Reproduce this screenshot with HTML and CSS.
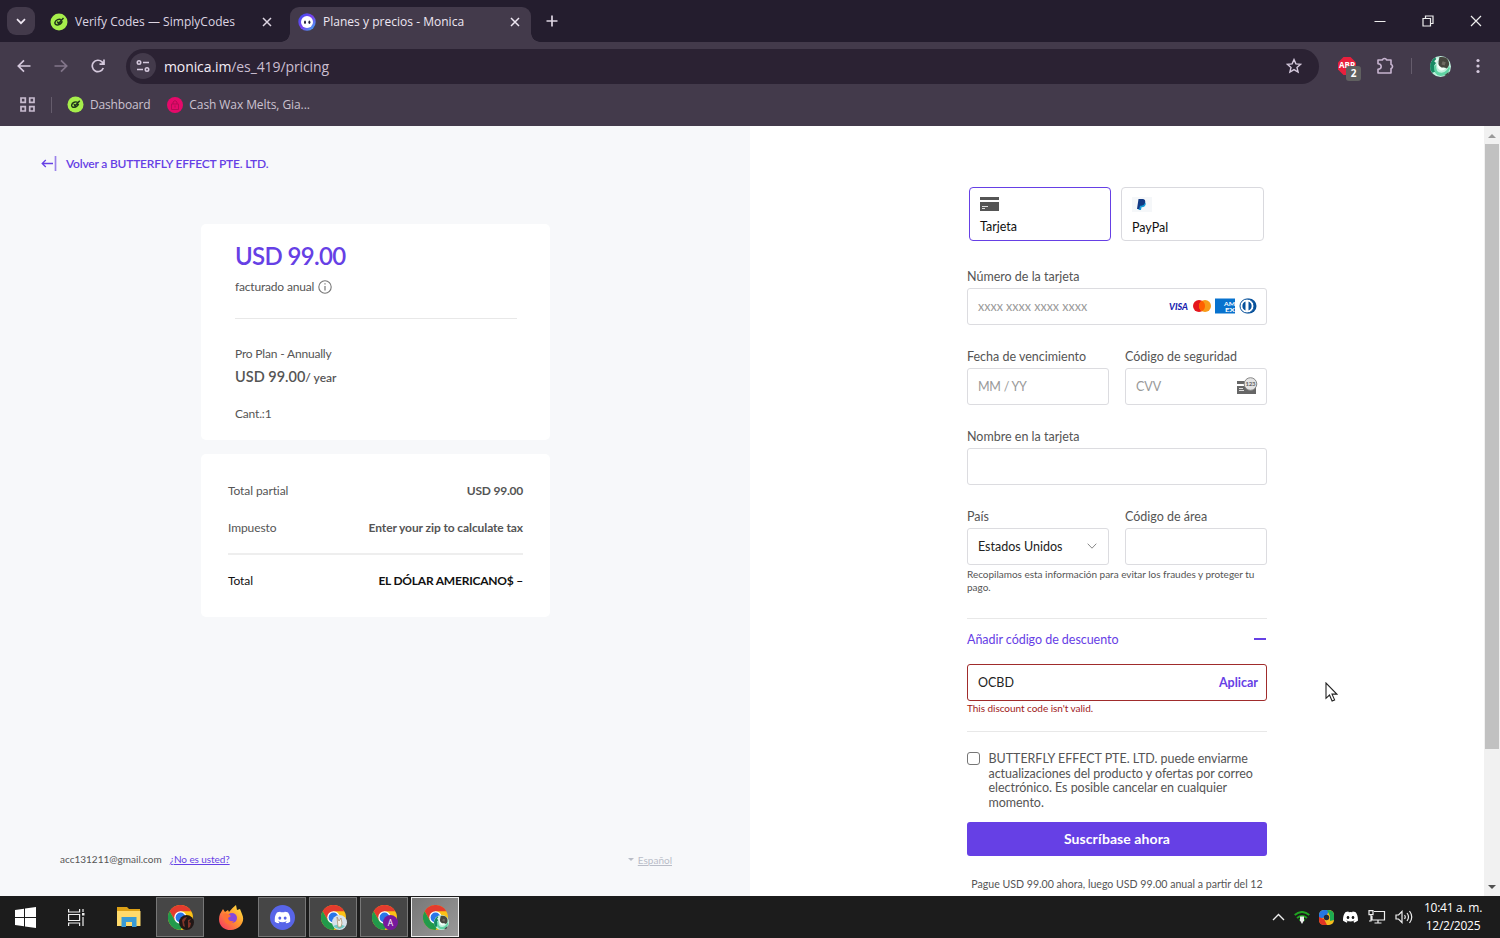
FILE: index.html
```html
<!DOCTYPE html>
<html lang="es">
<head>
    <meta charset="UTF-8">
    <meta name="viewport" content="width=device-width, initial-scale=1.0">
    <title>Planes y precios - Monica</title>
    <link rel="stylesheet" href="styles.css">
</head>
<body>
    <!-- shared icons -->
    <svg class="defs" width="0" height="0">
        <symbol id="simply" viewBox="0 0 18 18">
            <circle cx="9" cy="9" r="8.5" fill="#a6ee4b"/>
            <path d="M11.2 6.800C9.500 5.600 5.400 6.500 4.900 9.600c-.3 3.300 5.400 3.500 7.400-1.400M7.300 8.500l1.200 1.900 5-5.400" fill="none" stroke="#20351b" stroke-width="1.500"/>
        </symbol>
        <symbol id="chrome" viewBox="0 0 24 24">
            <circle cx="12" cy="12" r="12" fill="#fbc116"/>
            <path d="M1.6 6A12 12 0 0 1 22.4 6H12L6.8 15z" fill="#e33b2e"/>
            <path d="M1.6 6A12 12 0 0 0 12 24l5.2-9-10.4 0z" fill="#229a4b"/>
            <circle cx="12" cy="12" r="6" fill="#fff"/>
            <circle cx="12" cy="12" r="4.7" fill="#2a76e8"/>
        </symbol>
        <symbol id="discord" viewBox="0 0 24 18">
            <path d="M20.3 1.5A19.8 19.8 0 0 0 15.4 0l-.7 1.3a18.3 18.3 0 0 0-5.4 0L8.600 0a19.700 19.700 0 0 0-4.900 1.500C.5 6.100-.3 10.600.1 15.100A19.900 19.900 0 0 0 6.100 18l1.200-2-1.900-.9.500-.4c3.900 1.800 8.200 1.800 12.100 0l.5.400-1.900.9 1.200 2a19.800 19.800 0 0 0 6-2.900c.5-5.200-.8-9.700-3.500-13.600zM8 12.300c-1.200 0-2.200-1.100-2.200-2.400S6.800 7.500 8 7.500s2.200 1.100 2.200 2.400S9.200 12.300 8 12.300zm8 0c-1.200 0-2.200-1.100-2.200-2.400s1-2.400 2.200-2.400 2.200 1.100 2.200 2.400-1 2.400-2.200 2.400z" fill="#fff"/>
        </symbol>
        <symbol id="green-avatar" viewBox="0 0 20 20">
            <circle cx="10" cy="10" r="10" fill="#bff0dc"/>
            <path d="M5 1.500A10 10 0 0 0 2 16l3-1-1-6 3-4z" fill="#168a63"/>
            <path d="M4 5l3-3 1 2-2 3zM15 15l3-2-1 4-4 2z" fill="#e8f7f0"/>
            <path d="M9 1q8-1 9 5 1 3-2 6-3-2-5 0-4-2-3-6z" fill="#46463f"/>
            <path d="M8 5q-3 5 1 8 3 2 6-1-2-1-4-1-4-2-3-6z" fill="#f3fff9"/>
            <path d="M6 8q-1 8 5 8 6-1 7-7l1 3q-2 7-9 7-7-1-6-9z" fill="#5fd3a3"/>
            <path d="M12 5l3 1-1 3-3-1z" fill="#6d6a62"/>
            <path d="M14 18l4-3-1 3-3 1z" fill="#39463f"/>
        </symbol>
    </svg>

    <div class="tab-bar">
        <button class="tab-search"><svg width="10" height="7" viewBox="0 0 10 7"><path d="M1 1.200l4 4 4-4" fill="none" stroke="#eee7f2" stroke-width="1.700"/></svg></button>
        <div class="tab">
            <svg width="18" height="18"><use href="#simply"/></svg>
            <span class="tab-title">Verify Codes — SimplyCodes</span>
            <svg class="close" width="10" height="10"><path d="M1 1l8 8M9 1L1 9" stroke="#ddd5e2" stroke-width="1.500"/></svg>
        </div>
        <div class="tab active">
            <svg width="18" height="18" viewBox="0 0 18 18">
                <defs><linearGradient id="mon" x1="0" y1="0" x2="1" y2="1"><stop offset="0" stop-color="#3150ee"/><stop offset=".5" stop-color="#7b42ef"/><stop offset="1" stop-color="#35b8f1"/></linearGradient></defs>
                <circle cx="9" cy="9" r="8.700" fill="url(#mon)"/><circle cx="9" cy="9" r="6" fill="#fff"/>
                <ellipse cx="7" cy="9.300" rx="1" ry="1.700" fill="#242040"/><ellipse cx="11.400" cy="9.300" rx="1" ry="1.700" fill="#242040"/>
            </svg>
            <span class="tab-title">Planes y precios - Monica</span>
            <svg class="close" width="10" height="10"><path d="M1 1l8 8M9 1L1 9" stroke="#eee7f2" stroke-width="1.500"/></svg>
        </div>
        <svg class="new-tab" width="12" height="12"><path d="M6 .5v11M.5 6h11" stroke="#ddd5e2" stroke-width="1.700"/></svg>
        <div class="window-buttons">
            <svg width="12" height="12"><path d="M.5 6.500h11" stroke="#eee"/></svg>
            <svg width="12" height="12"><path d="M1 3.500h7.500V11H1zM3.500 3.500V1H11v7.500H8.500" fill="none" stroke="#eee" stroke-width="1.200"/></svg>
            <svg width="12" height="12"><path d="M1 1l10 10M11 1L1 11" stroke="#eee" stroke-width="1.200"/></svg>
        </div>
    </div>

    <div class="toolbar">
        <svg class="nav-icon" width="14" height="14"><path d="M13.500 7H1.500M7 1.300L1.300 7 7 12.700" fill="none" stroke="#d5c9dd" stroke-width="1.700"/></svg>
        <svg class="nav-icon" width="14" height="14"><path d="M.5 7h12M7 1.300L12.700 7 7 12.700" fill="none" stroke="#82758a" stroke-width="1.700"/></svg>
        <svg class="nav-icon" width="14" height="14"><path d="M12.300 9A5.700 5.700 0 1 1 11 2.900l1.500 1.600M13 .5v4.600H8.500" fill="none" stroke="#d5c9dd" stroke-width="1.700"/></svg>
        <div class="omnibox">
            <span class="site-info"><svg width="14" height="14" viewBox="0 0 14 14" fill="none" stroke="#d5c9dd" stroke-width="1.600"><circle cx="3" cy="3.500" r="1.700"/><path d="M7 3.500h6M1 10.500h6"/><circle cx="11" cy="10.500" r="1.700"/></svg></span>
            <span class="url">monica.im<span>/es_419/pricing</span></span>
            <svg class="star" width="16" height="16" viewBox="0 0 16 16"><path d="M8 1.600l1.900 4.300 4.700.4-3.600 3.100 1.100 4.600L8 11.600 3.900 14 5 9.400 1.400 6.300l4.700-.4z" fill="none" stroke="#d5c9dd" stroke-width="1.400"/></svg>
        </div>
        <div class="adblock"><svg width="18" height="18" viewBox="0 0 18 18"><path d="M5.500 0h7L18 5.500v7L12.500 18h-7L0 12.500v-7z" fill="#e8203d"/><text x="1" y="11" fill="#fff" font-size="8" font-weight="700" textLength="16" lengthAdjust="spacingAndGlyphs">ABP</text></svg><span class="count">2</span></div>
        <svg class="puzzle" width="18" height="18" viewBox="0 0 18 18"><path d="M2 3h4.500V2.500q2-2 4 0V3H15v4.500h.5q2 2 0 4H15V16H2v-3.700q3.200-.3 3.200-2.800T2 6.700z" fill="none" stroke="#c7b4d0" stroke-width="1.600" stroke-linejoin="round"/></svg>
        <span class="divider"></span>
        <svg class="profile" width="21" height="21"><use href="#green-avatar"/></svg>
        <svg class="dots" width="4" height="16" fill="#d5c9dd"><circle cx="2" cy="2.500" r="1.600"/><circle cx="2" cy="8" r="1.600"/><circle cx="2" cy="13.500" r="1.600"/></svg>
    </div>

    <div class="bookmarks">
        <svg width="15" height="15" fill="none" stroke="#c8bbcf" stroke-width="1.700"><path d="M1 1h4.300v4.300H1zM9.700 1H14v4.300H9.700zM1 9.700h4.300V14H1zM9.700 9.700H14V14H9.700z"/></svg>
        <span class="divider"></span>
        <svg width="17" height="17"><use href="#simply"/></svg>
        <span class="bookmark-one">Dashboard</span>
        <svg width="16" height="16" viewBox="0 0 16 16"><circle cx="8" cy="8" r="8" fill="#e5096a"/><path d="M4.500 7h7v5.500h-7zM6 7V5q2-3 4 0v2M8 8.500v2" fill="none" stroke="#b30b54"/></svg>
        <span class="bookmark-two">Cash Wax Melts, Gia...</span>
    </div>

    <main>
        <section class="summary">
            <a class="back"><svg width="16" height="15"><path d="M12 7.500H1.200M4.800 4L1.200 7.500 4.800 11" fill="none" stroke="#6640e5" stroke-width="1.300"/><path d="M14.500 0v15" stroke="#9b83ea" stroke-width="1.700"/></svg><span>Volver a BUTTERFLY EFFECT PTE. LTD.</span></a>
            <div class="card plan">
                <div class="amount">USD 99.00</div>
                <div class="billed"><span>facturado anual</span><svg width="14" height="14"><circle cx="7" cy="7" r="6.200" fill="none" stroke="#777" stroke-width="1.100"/><path d="M7 3.300v1.200M7 6v4.500" stroke="#777" stroke-width="1.200"/></svg></div>
                <hr>
                <div class="plan-name">Pro Plan - Annually</div>
                <div class="plan-price">USD 99.00<small>/ year</small></div>
                <div class="quantity">Cant.:1</div>
            </div>
            <div class="card totals">
                <div class="row"><span>Total partial</span><b>USD 99.00</b></div>
                <div class="row"><span>Impuesto</span><b class="tax-value">Enter your zip to calculate tax</b></div>
                <hr>
                <div class="row total"><span>Total</span><b>EL DÓLAR AMERICANO$ –</b></div>
            </div>
            <div class="account">
                <span class="email">acc131211@gmail.com</span><a class="not-you">¿No es usted?</a>
                <span class="language"><i></i><u>Español</u></span>
            </div>
        </section>

        <section class="checkout">
            <form>
                <div class="methods">
                    <div class="method selected">
                        <svg width="19" height="14"><path d="M0 0h19v3H0zM0 5h19v9H0z" fill="#555"/><path d="M2 9.500h6M2 11.500h3" stroke="#ddd"/></svg>
                        <span>Tarjeta</span>
                    </div>
                    <div class="method paypal">
                        <svg width="20" height="15"><path d="M0 0h20v15H0z" fill="#f5f7f9"/><path d="M7.500 4H11q3.500 1 2.500 4-1 2.500-4 2.300L9 13H6.500z" fill="#169bd7"/><path d="M6.500 2H11q3 .5 2 4-1 3-4 2.800H8L7.300 12H5z" fill="#123984"/></svg>
                        <span>PayPal</span>
                    </div>
                </div>

                <label>Número de la tarjeta</label>
                <div class="field">
                    <span class="placeholder">xxxx xxxx xxxx xxxx</span>
                    <svg class="brands" width="90" height="16" viewBox="0 0 90 16">
                        <text x="1" y="11.700" class="visa" textLength="19" lengthAdjust="spacingAndGlyphs">VISA</text>
                        <circle cx="31" cy="8" r="6" fill="#e5161d"/><circle cx="37" cy="8" r="6" fill="#f79b18"/><path d="M34 2.800a6 6 0 0 1 0 10.400 6 6 0 0 1 0-10.400" fill="#ff5f00"/>
                        <path d="M47 .5h20v15H47z" fill="#0872ce"/><text x="56" y="7.500" class="amex" textLength="11" lengthAdjust="spacingAndGlyphs">AM</text><text x="57" y="13.500" class="amex" textLength="10" lengthAdjust="spacingAndGlyphs">EX</text>
                        <circle cx="81" cy="8" r="7.500" fill="#07519b"/><circle cx="79" cy="8" r="7" fill="#fff" stroke="#07519b"/><path d="M77.500 3.500a4.800 4.800 0 0 0 0 9zM80.500 3.500a4.800 4.800 0 0 1 0 9z" fill="#07519b"/>
                    </svg>
                </div>

                <div class="pair">
                    <div>
                        <label>Fecha de vencimiento</label>
                        <div class="field"><span class="placeholder expiry">MM / YY</span></div>
                    </div>
                    <div>
                        <label>Código de seguridad</label>
                        <div class="field"><span class="placeholder">CVV</span>
                            <svg class="cvv-icon" width="21" height="18" viewBox="0 0 21 18"><path d="M0 4h19v3H0zM0 9h19v8H0z" fill="#666"/><path d="M2 13.500h5M2 11.500h4" stroke="#ddd"/><circle cx="13.500" cy="7" r="6.300" fill="#e3e3e3" stroke="#888"/><text x="8.500" y="9" class="digits" textLength="10">123</text></svg>
                        </div>
                    </div>
                </div>

                <label>Nombre en la tarjeta</label>
                <div class="field"></div>

                <div class="pair">
                    <div>
                        <label>País</label>
                        <div class="field"><span>Estados Unidos</span><svg class="chevron" width="10" height="6"><path d="M.7.7L5 5.200 9.300.7" fill="none" stroke="#888"/></svg></div>
                    </div>
                    <div>
                        <label>Código de área</label>
                        <div class="field"></div>
                    </div>
                </div>
                <p class="hint">Recopilamos esta información para evitar los fraudes y proteger tu<br>pago.</p>

                <hr>
                <div class="discount"><span>Añadir código de descuento</span><i></i></div>
                <div class="field error"><span>OCBD</span><b>Aplicar</b></div>
                <p class="error-text">This discount code isn't valid.</p>
                <hr class="second">

                <div class="consent">
                    <span class="checkbox"></span>
                    <p>BUTTERFLY EFFECT PTE. LTD. puede enviarme<br>actualizaciones del producto y ofertas por correo<br>electrónico. Es posible cancelar en cualquier<br>momento.</p>
                </div>
                <button type="button" class="subscribe">Suscríbase ahora</button>
                <p class="terms">Pague USD 99.00 ahora, luego USD 99.00 anual a partir del 12</p>
            </form>
        </section>

        <div class="scrollbar"><i class="up"></i><span class="thumb"></span><i class="down"></i></div>
        <svg class="cursor" width="13" height="20" viewBox="0 0 13 20"><path d="M1 1v15.300l3.500-3.300 2.600 6 2.500-1.100-2.600-5.800h4.800z" fill="#fff" stroke="#222" stroke-width="1.100"/></svg>
    </main>

    <div class="taskbar">
        <div class="task start"><svg width="21" height="21"><path d="M0 3l9-1.300V10H0zM10 1.500L21 0v10H10zM0 11h9v8.300L0 18zM10 11h11v10l-11-1.500z" fill="#fff"/></svg></div>
        <div class="task view"><svg width="17" height="17" fill="none" stroke="#eee" stroke-width="1.200"><path d="M.6 0v3h11V0M.6 5.500h11v6H.6zM.6 17v-3h11v3M15 0v3M15 8v9"/><path d="M14 4h2.500v2.500H14z" fill="#eee" stroke="none"/></svg></div>
        <div class="task"><svg width="24" height="22"><path d="M0 1h10l2 2h11v5H0z" fill="#dda116"/><path d="M0 5h23.500v15H0z" fill="#ffda6b"/><path d="M4.500 21v-10h15v10H15v-5H9v5z" fill="#399bd5"/></svg></div>
        <div class="task open"><svg width="25" height="25"><use href="#chrome"/></svg><svg class="badge" width="15" height="15" viewBox="0 0 15 15"><circle cx="7.500" cy="7.500" r="7.500" fill="#211716"/><path d="M3 5q2-3 5-3L5 7l1 5-2-1zM9 5l3-1-2 3 2 1-1 4-2 1z" fill="#813428"/></svg></div>
        <div class="task"><svg width="25" height="25" viewBox="0 0 25 25"><defs><linearGradient id="fox" x1="1" y1="0" x2="0" y2="1"><stop offset="0" stop-color="#fff044"/><stop offset=".45" stop-color="#ff982f"/><stop offset="1" stop-color="#f72d68"/></linearGradient></defs><path d="M4 4l2 3 3-2 1 2q3-4 7-7l1 5 3-1 2 5c4 8-3 16-11 16C2 25-2 17 1 9z" fill="url(#fox)"/><circle cx="13" cy="13" r="5" fill="#8548dc"/><path d="M4 9q4-2 8 2l-3 2q1 4 6 3-4 6-9 1z" fill="#ff7334"/></svg></div>
        <div class="task open"><svg width="25" height="25"><circle cx="12.500" cy="12.500" r="12.500" fill="#5865e8"/><use href="#discord" x="4.500" y="6.500" width="16" height="12"/></svg></div>
        <div class="task open"><svg width="25" height="25"><use href="#chrome"/></svg><svg class="badge" width="15" height="15" viewBox="0 0 15 15"><circle cx="7.500" cy="7.500" r="7.500" fill="#d7e1eb"/><path d="M1 11q6-3 12 0-5 6-12 0" fill="#6dcbc5"/><path d="M5 2l2 4 2-3 1 5-1 4H6z" fill="#f7f3e8" stroke="#a68a66" stroke-width=".7"/></svg></div>
        <div class="task open"><svg width="25" height="25"><use href="#chrome"/></svg><svg class="badge" width="15" height="15"><circle cx="7.500" cy="7.500" r="7.500" fill="#77189c"/><text x="7.500" y="10.500" text-anchor="middle" fill="#fff" font-size="8.500">A</text></svg></div>
        <div class="task open current"><svg width="25" height="25"><use href="#chrome"/></svg><svg class="badge" width="15" height="15"><use href="#green-avatar"/></svg></div>

        <div class="tray">
            <svg width="13" height="8"><path d="M1 7l5.500-5.500L12 7" fill="none" stroke="#eee" stroke-width="1.400"/></svg>
            <svg width="16" height="13" viewBox="0 0 16 13"><path d="M.7 4q7.300-6 14.600 0M3 7q5-4 10 0M5.300 9.500q2.700-2 5.400 0" fill="none" stroke="#21a421" stroke-width="2"/><path d="M6 5.500h4v4L8 13 6 9.500z" fill="#eee"/></svg>
            <svg width="15" height="15" viewBox="0 0 15 15"><rect width="15" height="15" rx="5" fill="#f5bb1d"/><path d="M0 8V4q1-4 5-4h5L8 5 4 8z" fill="#2478e3"/><path d="M8 0q7 0 7 5v5l-4 1V6z" fill="#1fac50"/><path d="M0 7l5 2 3 6H5q-5 0-5-5z" fill="#e23424"/><circle cx="7.500" cy="7.500" r="2.700" fill="#202b3d"/></svg>
            <svg width="15" height="12"><use href="#discord"/></svg>
            <svg width="18" height="14" fill="none" stroke="#eee" stroke-width="1.200"><path d="M6 1.500h10.500V10H4V6M10 10v3M6.500 13h7M1 .7h4v4H1zM3 5v6H1"/></svg>
            <svg width="18" height="14" fill="none" stroke="#eee" stroke-width="1.200"><path d="M1 5h2.500L7 1.500v11L3.500 9H1zM9.500 5q1.500 2 0 4M12 3q3 4 0 8M14.500 1q4.500 6 0 12"/></svg>
        </div>
        <div class="clock"><span>10:41 a. m.</span><span>12/2/2025</span></div>
    </div>
</body>
</html>
```
FILE: styles.css
```css
* {
    box-sizing: border-box;
}

body {
    margin: 0;
    width: 1500px;
    height: 938px;
    overflow: hidden;
    display: flex;
    flex-direction: column;
    font-family: "Open Sans", "Noto Sans", sans-serif;
    font-size: 12px;
    background: #433a4b;
}

svg {
    flex: none;
    display: block;
}

span, b, a, label {
    white-space: nowrap;
}

.defs {
    position: absolute;
}

/* browser window */
.tab-bar {
    height: 42px;
    flex: none;
    display: flex;
    align-items: center;
    background: #241d2e;
    color: #ddd5e2;
}

.tab-search {
    width: 28px;
    height: 28px;
    margin-left: 7px;
    padding: 0;
    border: 0;
    border-radius: 9px;
    background: #433a4b;
    display: flex;
    align-items: center;
    justify-content: center;
}

.tab {
    width: 254px;
    height: 35px;
    padding: 1px 17px 0 15px;
    display: flex;
    align-items: center;
    gap: 7px;
}

.tab.active {
    position: relative;
    width: 241px;
    margin: 0 1px;
    align-self: flex-end;
    padding: 0 11px 6px 8px;
    background: #433a4b;
    border-radius: 9px 9px 0 0;
    color: #eee7f2;
}

/* flared feet of the active tab */
.tab.active::before, .tab.active::after {
    content: "";
    position: absolute;
    bottom: 0;
    left: -9px;
    width: 9px;
    height: 9px;
    background: radial-gradient(circle at 0 0, transparent 8.5px, #433a4b 9px);
}

.tab.active::after {
    left: auto;
    right: -9px;
    background: radial-gradient(circle at 100% 0, transparent 8.5px, #433a4b 9px);
}

.tab .close {
    margin-left: auto;
}

.tab-title {
    letter-spacing: 0.02px;
}

.new-tab {
    margin-left: 14px;
}

.window-buttons {
    margin-left: auto;
    margin-right: 18px;
    display: flex;
    gap: 36px;
}

.toolbar {
    height: 48px;
    flex: none;
    display: flex;
    align-items: center;
    padding-left: 17px;
}

.nav-icon {
    margin-right: 23px;
}

.omnibox {
    width: 1193px;
    height: 35px;
    margin-left: -2px;
    border-radius: 18px;
    background: #2b2233;
    display: flex;
    align-items: center;
    padding: 0 17px 0 4px;
}

.site-info {
    width: 26px;
    height: 26px;
    border-radius: 50%;
    background: #433a4b;
    display: flex;
    align-items: center;
    justify-content: center;
}

.url {
    margin-left: 8px;
    font-size: 14px;
    letter-spacing: -0.1px;
    color: #f4edf6;
}

.url span {
    color: #cbbfd1;
}

.star {
    margin-left: auto;
}

.adblock {
    position: relative;
    margin-left: 19px;
}

.count {
    position: absolute;
    left: 8px;
    top: 9px;
    width: 15px;
    height: 15px;
    border-radius: 3px;
    background: #606060;
    color: #fff;
    font-size: 10px;
    font-weight: 700;
    line-height: 15px;
    text-align: center;
}

.puzzle {
    margin-left: 20px;
}

.divider {
    width: 1px;
    height: 16px;
    background: #655c6c;
}

.toolbar .divider {
    margin-left: 17px;
}

.profile {
    margin-left: 18px;
}

.dots {
    margin-left: 25px;
}

.bookmarks {
    height: 36px;
    flex: none;
    display: flex;
    align-items: center;
    padding: 0 0 7px 20px;
    color: #cbc2d0;
}

.bookmarks .divider {
    margin: 0 15px 0 16px;
}

.bookmark-one {
    margin: 0 17px 0 6px;
    letter-spacing: -0.18px;
}

.bookmark-two {
    margin-left: 6px;
    letter-spacing: -0.08px;
}

/* checkout page */
main {
    position: relative;
    height: 770px;
    flex: none;
    display: flex;
    overflow: hidden;
    font-family: Lato, sans-serif;
    font-size: 12px;
    color: #555;
    background: #fff;
}

p {
    margin: 0;
}

hr {
    width: 100%;
    height: 1px;
    margin: 0;
    border: 0;
    background: #e8e8e8;
}

.summary {
    width: 750px;
    display: flex;
    flex-direction: column;
    background: #f7f8fa;
}

.back {
    display: flex;
    align-items: center;
    gap: 9px;
    height: 20px;
    margin: 27px 0 51px 41px;
    color: #6640e5;
    font-weight: 600;
    letter-spacing: -0.2px;
}

.card {
    width: 349px;
    margin-left: 201px;
    border-radius: 5px;
    background: #fff;
    line-height: 20px;
}

.plan {
    height: 216px;
    padding: 16px 33px 0 34px;
    letter-spacing: -0.18px;
}

.amount {
    height: 32px;
    line-height: 32px;
    font-size: 24px;
    font-weight: 600;
    letter-spacing: -0.65px;
    color: #6640e5;
}

.billed {
    display: flex;
    align-items: center;
    gap: 4px;
    margin: 5px 0 21px;
}

.plan-name {
    margin-top: 25px;
}

.plan-price {
    height: 20px;
    margin-top: 3px;
    font-size: 14.5px;
    font-weight: 600;
    letter-spacing: 0;
}

.plan-price small {
    font-size: 12px;
}

.quantity {
    margin-top: 17px;
}

.totals {
    height: 163px;
    margin-top: 14px;
    padding: 27px 27px 0;
    letter-spacing: -0.1px;
}

.row {
    display: flex;
    justify-content: space-between;
    margin-bottom: 17px;
}

.row b {
    letter-spacing: -0.22px;
}

.row .tax-value {
    letter-spacing: -0.1px;
}

.totals hr {
    height: 2px;
    margin: -2px 0 16px;
    background: #eee;
}

.row.total {
    color: #111;
}

.account {
    margin-top: auto;
    height: 20px;
    margin-bottom: 27px;
    padding: 0 78px 0 60px;
    display: flex;
    align-items: center;
    font-size: 10px;
}

.not-you {
    margin-left: 8px;
    color: #6640e5;
    text-decoration: underline;
    letter-spacing: -0.08px;
}

.language {
    display: flex;
    align-items: center;
    gap: 4px;
    margin-left: auto;
    padding-top: 1px;
    color: #b9bdc8;
}

.language i {
    border: 3px solid transparent;
    border-top-color: #b9bdc8;
    border-bottom: 0;
}

.checkout {
    width: 734px;
    padding: 61px 0 0 217px;
}

form {
    width: 300px;
}

.methods {
    display: flex;
    gap: 10px;
    margin: 0 3px 27px 2px;
}

.method {
    width: 142px;
    height: 54px;
    padding: 9px 10px 0;
    border: 1px solid #d9d9de;
    border-radius: 4px;
    color: #111;
    font-size: 12.5px;
    line-height: 16px;
}

.method.selected {
    border-color: #6640e5;
}

.method span {
    display: block;
    margin-top: 8px;
}

.method.paypal {
    width: 143px;
}

label {
    display: block;
    height: 17px;
    line-height: 17px;
    margin-bottom: 3px;
    font-size: 12.5px;
}

.field {
    height: 37px;
    margin-bottom: 23px;
    padding: 0 8px 1px 10px;
    border: 1px solid #dcdce0;
    border-radius: 3px;
    display: flex;
    align-items: center;
    justify-content: space-between;
    font-size: 12.5px;
    color: #222;
}

.placeholder {
    color: #999;
}

.expiry {
    letter-spacing: -0.25px;
}

.visa {
    font-size: 10px;
    font-weight: 900;
    font-style: italic;
    fill: #1a1fb0;
}

.amex {
    font-size: 6px;
    font-weight: 700;
    fill: #fff;
}

.digits {
    font-size: 6px;
    font-weight: 700;
    fill: #666;
}

.pair {
    display: grid;
    grid-template-columns: 142px 142px;
    gap: 16px;
}

.chevron {
    margin-right: 3px;
}

.hint {
    margin: -20px 0 25px;
    font-size: 10px;
    line-height: 12.5px;
    letter-spacing: -0.02px;
    white-space: nowrap;
}

.discount {
    height: 20px;
    margin: 10px 0 15px;
    padding-right: 1px;
    display: flex;
    align-items: center;
    justify-content: space-between;
    font-size: 12.5px;
    letter-spacing: -0.04px;
    color: #6640e5;
}

.discount i {
    width: 12px;
    height: 2px;
    background: #6640e5;
}

.field.error {
    margin-bottom: 1px;
    border-color: #a02c2c;
}

.error b {
    color: #6640e5;
}

.error-text {
    height: 13px;
    line-height: 13px;
    font-size: 10px;
    letter-spacing: -0.04px;
    color: #a02020;
}

hr.second {
    margin-top: 16px;
}

.consent {
    height: 71px;
    padding-top: 20px;
    display: flex;
    gap: 8.5px;
    font-size: 12.5px;
    line-height: 14.6px;
    letter-spacing: -0.04px;
    white-space: nowrap;
}

.checkbox {
    width: 13px;
    height: 13px;
    flex: none;
    border: 1px solid #767676;
    border-radius: 3px;
}

.subscribe {
    width: 300px;
    height: 34px;
    margin-top: 19px;
    padding: 0 0 1px;
    border: 0;
    border-radius: 3px;
    background: #6640e5;
    color: #fff;
    font: 700 14px Lato, sans-serif;
    letter-spacing: 0.08px;
    display: block;
}

.terms {
    margin-top: 22px;
    line-height: 13px;
    font-size: 10.6px;
    text-align: center;
    white-space: nowrap;
}

.scrollbar {
    width: 16px;
    display: flex;
    flex-direction: column;
    align-items: center;
    background: #f1f1f1;
}

.scrollbar i {
    border: 4px solid transparent;
}

.scrollbar .up {
    margin: 8px 0 6px;
    border-bottom-color: #999;
    border-top: 0;
}

.thumb {
    width: 14px;
    height: 605px;
    background: #c1c1c1;
}

.scrollbar .down {
    margin-top: auto;
    margin-bottom: 7px;
    border-top-color: #505050;
    border-bottom: 0;
}

.cursor {
    position: absolute;
    left: 1325px;
    top: 556px;
}

/* taskbar */
.taskbar {
    height: 42px;
    flex: none;
    display: flex;
    align-items: center;
    gap: 3px;
    padding-left: 3px;
    background: #1c1c1c;
    color: #fff;
}

.task {
    position: relative;
    width: 48px;
    height: 40px;
    display: flex;
    align-items: center;
    justify-content: center;
}

.task.start, .task.view {
    padding-right: 4px;
}

.task.open {
    background: #464646;
    border: 1px solid #777;
}

.task.current {
    background: linear-gradient(135deg, #777, #999);
    border-color: #eee;
}

.badge {
    position: absolute;
    left: 22px;
    top: 17px;
}

.tray {
    margin-left: auto;
    display: flex;
    align-items: center;
    gap: 9.3px;
}

.clock {
    width: 60px;
    margin-left: 7px;
    margin-right: 17px;
    display: flex;
    flex-direction: column;
    align-items: center;
    font-size: 12px;
    line-height: 18px;
    letter-spacing: -0.25px;
}
```
